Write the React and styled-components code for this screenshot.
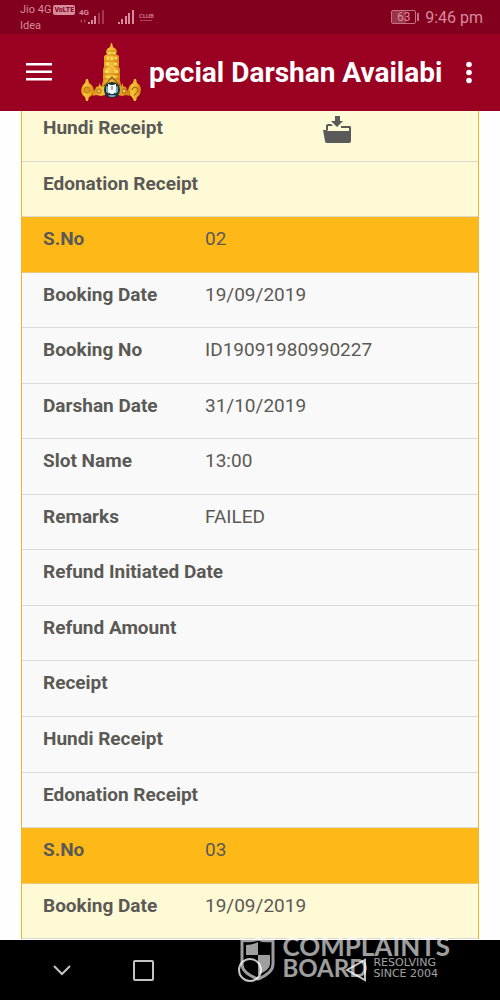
import styled, { createGlobalStyle, css } from "styled-components";

const GlobalStyle = createGlobalStyle`
	* {
		box-sizing: border-box;
	}
	body {
		margin: 0;
		background: #fefefe;
		font-family: Roboto, "Liberation Sans", sans-serif;
	}
	button {
		display: flex;
		align-items: center;
		justify-content: center;
		padding: 0;
		border: 0;
		background: none;
		color: inherit;
		font: inherit;
	}
`;

const Page = styled.div`
	position: relative;
	display: flex;
	flex-direction: column;
	height: 100vh;
	overflow: hidden;
`;

const StatusBar = styled.div`
	display: flex;
	flex: none;
	align-items: center;
	justify-content: space-between;
	height: 34px;
	padding: 0 17px 0 20px;
	background: #82001d;
	color: #d68c9b;
`;

const Group = styled.div`
	display: flex;
	align-items: center;
`;

const Carriers = styled.div`
	padding-top: 2px;
	font-size: 11px;
	line-height: 16px;
`;

const CarrierLine = styled.div`
	display: flex;
	align-items: center;
	gap: 2px;
`;

const VolteTag = styled.span`
	padding: 0 1px;
	border-radius: 2px;
	background: #d68c9b;
	color: #82001d;
	font-size: 7px;
	font-weight: 700;
	line-height: 10px;
`;

const Signals = styled.svg`
	margin-left: 4px;
`;

const Club = styled.span`
	display: flex;
	flex-direction: column;
	align-items: center;
	gap: 1px;
	margin-left: 4px;
	font-size: 6px;
	font-weight: 500;
	line-height: 6px;

	&::after {
		content: "";
		width: 12px;
		height: 1px;
		background: #a8455a;
	}
`;

const Battery = styled.span`
	position: relative;
	width: 25px;
	height: 14px;
	margin-right: 9px;
	border: 1px solid #c47383;
	border-radius: 2px;
	background: linear-gradient(90deg, #9c3349 60%, transparent 60%);
	font-size: 12px;
	line-height: 12px;
	text-align: center;

	&::after {
		content: "";
		position: absolute;
		top: 2px;
		right: -4px;
		width: 2px;
		height: 8px;
		background: #c47383;
	}
`;

const Time = styled.span`
	font-size: 16px;
`;

const AppBar = styled.header`
	display: flex;
	flex: none;
	align-items: center;
	height: 77px;
	padding: 0 20px 0 26px;
	background: #9a0022;
	color: #fff;
`;

const Logo = styled.svg`
	flex: none;
	margin-left: 29px;
`;

const Title = styled.h1`
	flex: 1;
	min-width: 0;
	margin: 0 8px;
	overflow: hidden;
	font-size: 28px;
	font-weight: 700;
	line-height: 36px;
	white-space: nowrap;
`;

const Content = styled.main`
	flex: 1;
	min-height: 0;
	overflow: hidden;
`;

/* starts a little under the app bar, as the list is scrolled */
const Bookings = styled.table`
	display: block;
	margin: -5px 21px 0;
	border: solid #f0b52a;
	border-width: 0 1px;
	color: #5b5955;
	font-size: 19px;
	line-height: 24px;
`;

const Body = styled.tbody`
	display: block;
`;

const tones = {
	cream: css`
		background: #fefad5;
		border-color: #d9d7cf;
	`,
	light: css`
		background: #f9f9f9;
		border-color: #dadada;
	`,
	amber: css`
		background: #feb817;
		border-color: #ecc876;
	`,
};

const Row = styled.tr`
	display: grid;
	grid-template-columns: 162px 1fr;
	height: calc(100vh / 18);
	padding: 10px 8px 0 21px;
	border-bottom: 1px solid;
	${({ $tone }) => tones[$tone]}
`;

const Label = styled.th`
	padding: 0;
	font-weight: 700;
	text-align: left;
	white-space: nowrap;
`;

const Value = styled.td`
	display: flex;
	align-items: flex-start;
	justify-content: ${({ $center }) => ($center ? "center" : "flex-start")};
	padding: 0;
`;

const NavBar = styled.nav`
	display: flex;
	flex: none;
	align-items: center;
	height: 60px;
	padding: 0 131px 0 48px;
	background: #000;
	color: #c4c4c4;
`;

const NavKeys = styled.div`
	display: flex;
	flex: 1;
	justify-content: space-between;
	margin-left: 55px;
`;

const Watermark = styled.div`
	position: absolute;
	right: 50px;
	bottom: 18px;
	display: flex;
	align-items: flex-start;
	gap: 6px;
	color: #fff;
	opacity: 0.62;
	pointer-events: none;
`;

const Brand = styled.div`
	font-family: Lato, sans-serif;
	font-size: 26px;
	font-weight: 700;
	line-height: 22px;
`;

const BrandRow = styled.div`
	display: flex;
	align-items: center;
	gap: 6px;
	font-size: 24px;
`;

const Tagline = styled.div`
	font-family: "DejaVu Sans", sans-serif;
	font-size: 11px;
	font-weight: 400;
	line-height: 11px;
`;

const rows = [
	["Hundi Receipt", "download", "cream"],
	["Edonation Receipt", "", "cream"],
	["S.No", "02", "amber"],
	["Booking Date", "19/09/2019", "light"],
	["Booking No", "ID19091980990227", "light"],
	["Darshan Date", "31/10/2019", "light"],
	["Slot Name", "13:00", "light"],
	["Remarks", "FAILED", "light"],
	["Refund Initiated Date", "", "light"],
	["Refund Amount", "", "light"],
	["Receipt", "", "light"],
	["Hundi Receipt", "", "light"],
	["Edonation Receipt", "", "light"],
	["S.No", "03", "amber"],
	["Booking Date", "19/09/2019", "cream"],
];

const SignalIcon = () => (
	<Signals width="56" height="20" viewBox="0 0 56 20" fill="currentColor">
		<text x="0" y="8" fontSize="8" fontWeight="700">4G</text>
		<path d="M1 14l2-2v4zM7 14l-2-2v4z" opacity=".5" />
		<path d="M9 15h2v2H9zM12 13h2v4h-2zM15 9h2v8h-2z" />
		<path d="M19 6h2v11h-2zM23 3h2v14h-2z" opacity=".4" />
		<path d="M39 15h2v2h-2zM42 12h2v5h-2zM46 9h2v8h-2zM49 6h2v11h-2zM53 3h2v14h-2z" />
	</Signals>
);

const TempleLogo = () => (
	<Logo width="60" height="60" viewBox="0 0 60 60" aria-hidden="true">
		<defs>
			<linearGradient id="gold" x1="0" x2="1">
				<stop offset="0" stopColor="#dc8a14" />
				<stop offset=".3" stopColor="#f7c437" />
				<stop offset=".65" stopColor="#eeb02a" />
				<stop offset="1" stopColor="#d07c12" />
			</linearGradient>
		</defs>
		<path fill="url(#gold)" d="M30 0h1l1 4 3 2 1 3-1 2 3 2v11l1 2v12l1 3v8H21v-8l1-3V26l1-2V13l3-2-1-2 1-3 3-2z" />
		<path stroke="#b56f0c" strokeWidth="1" opacity=".6" d="M26 8h9M25 12h11M23 18h15M23 24h15M22 31h17M22 36h17" />
		<path fill="#ffdf63" d="M28 9h2v2h-2zM32 9h2v2h-2zM26 14h2v2h-2zM30 14h2v3h-2zM34 14h2v2h-2zM25 20h3v2h-3zM33 20h3v2h-3zM24 27h2v3h-2zM35 27h2v3h-2z" />
		<path fill="none" stroke="#ffe07a" strokeWidth="1" d="M27 30v-4q4-5 7 0v4M25 34h4M32 34h4" />
		<path fill="none" stroke="#5b3a12" strokeWidth="1" d="M23 43l8-9 8 9" />
		<path fill="url(#gold)" d="M5 36h2l1 4q4 2 5 7-1 6-5 7l-1 4H5l-1-4q-4-2-4-7 1-5 4-7z" />
		<path fill="url(#gold)" d="M53 36h2l1 4q4 2 4 7-1 6-4 7l-1 4h-2l-2-4q-4-2-4-7 1-5 5-7z" />
		<path fill="url(#gold)" d="M11 49l3-2 1-3 3-1v-3l2 3 4 2v7l-4 1-5-1-3 1zM49 49l-3-2-1-3-3-1v-3l-2 3-3 2v7l4 1 4-1 3 1z" />
		<circle cx="6" cy="47" r="3" fill="#dd9919" stroke="#bd7a0d" />
		<circle cx="18" cy="48" r="2" fill="#f8d15a" stroke="#ad680c" />
		<circle cx="43" cy="48" r="2" fill="#f8d15a" stroke="#ad680c" />
		<path fill="none" stroke="#94570c" strokeWidth="1" d="M51 47a3 3 0 1 1 4 3l-2 3" />
		<circle cx="31" cy="47" r="8" fill="#17323f" />
		<path fill="#6ea3b4" d="M25 43l3 1v7l-3-2zM37 43l-3 1v7l3-2zM27 52h8l-2 2h-4z" />
		<path fill="#fff" d="M27 41l3 1h2l3-1v8l-3 2h-2l-3-2z" />
		<path stroke="#42657a" strokeWidth="1" d="M31 43v4" />
	</Logo>
);

const FolderDownload = () => (
	<svg width="29" height="28" viewBox="0 0 29 28" fill="#5a5a5a">
		<path d="M12 0h5v5h3l-6 6-6-6h4z" />
		<path d="M3 14V9l2-1h3l2 2H5v4zM18 10h9q1 0 1 2v3h-2v-3h-8z" />
		<path d="M0 14h4l1 1h7l2 0h14v10q0 2-2 2H4q-2 0-2-2z" />
	</svg>
);

const App = () => {
	return (
		<>
			<GlobalStyle />
			<Page>
				<StatusBar>
					<Group>
						<Carriers>
							<CarrierLine>
								Jio 4G <VolteTag>VoLTE</VolteTag>
							</CarrierLine>
							<CarrierLine>Idea</CarrierLine>
						</Carriers>
						<SignalIcon />
						<Club>CLUB</Club>
					</Group>
					<Group>
						<Battery>63</Battery>
						<Time>9:46 pm</Time>
					</Group>
				</StatusBar>
				<AppBar>
					<button type="button" aria-label="Menu">
						<svg width="26" height="20" viewBox="0 0 26 20" fill="currentColor">
							<path d="M0 0h26v2.5H0zM0 7.5h26V10H0zM0 15h26v2.5H0z" />
						</svg>
					</button>
					<TempleLogo />
					<Title>pecial Darshan Availabi</Title>
					<button type="button" aria-label="More">
						<svg width="22" height="24" viewBox="0 0 22 24" fill="currentColor">
							<circle cx="11" cy="3.5" r="2.8" />
							<circle cx="11" cy="11.5" r="2.8" />
							<circle cx="11" cy="19.5" r="2.8" />
						</svg>
					</button>
				</AppBar>
				<Content>
					<Bookings>
						<Body>
							{rows.map(([label, value, tone], i) => (
								<Row key={i} $tone={tone}>
									<Label scope="row">{label}</Label>
									<Value $center={value === "download"}>
										{value === "download" ? (
											<button type="button" aria-label="Download">
												<FolderDownload />
											</button>
										) : (
											value
										)}
									</Value>
								</Row>
							))}
						</Body>
					</Bookings>
				</Content>
				<NavBar>
					<button type="button" aria-label="Hide">
						<svg width="28" height="24" viewBox="0 0 28 24" fill="none" stroke="currentColor" strokeWidth="2">
							<path d="M6 8l8 8 8-8" />
						</svg>
					</button>
					<NavKeys>
						<button type="button" aria-label="Recent apps">
							<svg width="24" height="24" viewBox="0 0 24 24" fill="none" stroke="currentColor" strokeWidth="2">
								<rect x="3" y="3" width="19" height="19" rx="1" />
							</svg>
						</button>
						<button type="button" aria-label="Home">
							<svg width="24" height="24" viewBox="0 0 24 24" fill="none" stroke="currentColor" strokeWidth="2">
								<circle cx="12" cy="12" r="11" />
							</svg>
						</button>
						<button type="button" aria-label="Back">
							<svg width="24" height="24" viewBox="0 0 24 24" fill="none" stroke="currentColor" strokeWidth="2">
								<path d="M20 2v20L2 12z" />
							</svg>
						</button>
					</NavKeys>
				</NavBar>
				<Watermark>
					<svg width="36" height="47" viewBox="0 -2 36 47">
						<path fill="none" stroke="#fff" strokeWidth="3" d="M2 3q8 2 16-1 8 3 15 1v24q0 9-15 15Q2 36 2 27z" />
						<path fill="#fff" d="M6 8q6 0 12-3v13H6zM18 18h12v9q0 6-12 11z" />
					</svg>
					<Brand>
						<div>COMPLAINTS</div>
						<BrandRow>
							BOARD
							<Tagline>
								<div>RESOLVING</div>
								<div>SINCE 2004</div>
							</Tagline>
						</BrandRow>
					</Brand>
				</Watermark>
			</Page>
		</>
	);
};

export default App;
